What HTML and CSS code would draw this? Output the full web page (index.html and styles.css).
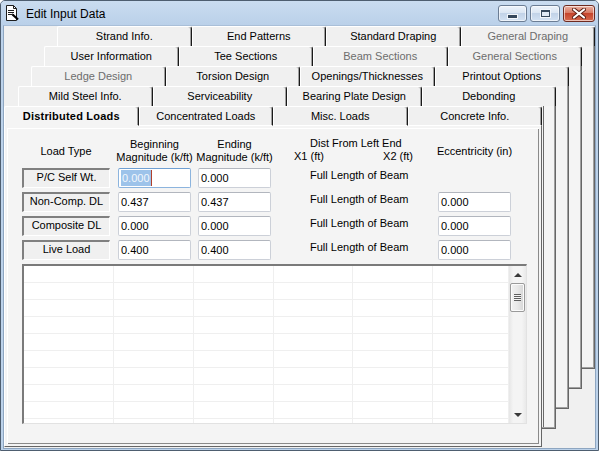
FILE: index.html
```html
<!DOCTYPE html>
<html>
<head>
<meta charset="utf-8">
<title>Edit Input Data</title>
<link rel="stylesheet" href="styles.css">
</head>
<body>
<div class="window">
  <div class="titlebar">
    <svg class="app-icon" viewBox="0 0 16 16" width="16" height="16">
      <path d="M2.5 0.5h7l3 3v12h-10z" fill="#fff" stroke="#1e1e1e"/>
      <path d="M9.5 0.5v3h3" fill="none" stroke="#1e1e1e"/>
      <path d="M4 5.5h6M4 7.5h6M4 9.5h4" stroke="#1e1e1e"/>
      <path d="M8.5 9.5l5.5 5" stroke="#000" stroke-width="2.2"/>
      <path d="M8 9l1.5 0.5" stroke="#000" stroke-width="1"/>
    </svg>
    <span class="title">Edit Input Data</span>
    <div class="caption-buttons">
      <div class="cbtn cbtn-min"><span class="g-min"></span></div>
      <div class="cbtn cbtn-max"><span class="g-max"></span></div>
      <div class="cbtn cbtn-close">
        <svg viewBox="0 0 14 11" width="14" height="11">
          <path d="M2 1.5l10 8M12 1.5l-10 8" stroke="#5a1e14" stroke-width="4" stroke-linecap="round"/>
          <path d="M2 1.5l10 8M12 1.5l-10 8" stroke="#fff" stroke-width="2.2" stroke-linecap="round"/>
        </svg>
      </div>
    </div>
  </div>

  <div class="client">
    <div class="stack">
      <div class="layer layer-1">
        <div class="tabrow">
          <div class="tab">Strand Info.</div>
          <div class="tab">End Patterns</div>
          <div class="tab">Standard Draping</div>
          <div class="tab disabled">General Draping</div>
        </div>
        <div class="page"></div>
      </div>

      <div class="layer layer-2">
        <div class="tabrow">
          <div class="tab">User Information</div>
          <div class="tab">Tee Sections</div>
          <div class="tab disabled">Beam Sections</div>
          <div class="tab disabled">General Sections</div>
        </div>
        <div class="page"></div>
      </div>

      <div class="layer layer-3">
        <div class="tabrow">
          <div class="tab disabled">Ledge Design</div>
          <div class="tab">Torsion Design</div>
          <div class="tab">Openings/Thicknesses</div>
          <div class="tab">Printout Options</div>
        </div>
        <div class="page"></div>
      </div>

      <div class="layer layer-4">
        <div class="tabrow">
          <div class="tab">Mild Steel Info.</div>
          <div class="tab">Serviceability</div>
          <div class="tab">Bearing Plate Design</div>
          <div class="tab">Debonding</div>
        </div>
        <div class="page page-edge"></div>
      </div>

      <div class="layer layer-5">
        <div class="tabrow tabrow-front">
          <div class="tab active">Distributed Loads</div>
          <div class="tab">Concentrated Loads</div>
          <div class="tab">Misc. Loads</div>
          <div class="tab">Concrete Info.</div>
        </div>
        <div class="page page-front">
          <div class="form">
            <div class="hdr hdr-label"><span>Load Type</span></div>
            <div class="hdr hdr-box"><span>Beginning</span><span>Magnitude (k/ft)</span></div>
            <div class="hdr hdr-box"><span>Ending</span><span>Magnitude (k/ft)</span></div>
            <div class="hdr-dist">
              <div class="dist-top">Dist From Left End</div>
              <div class="dist-x"><span>X1 (ft)</span><span>X2 (ft)</span></div>
            </div>
            <div class="hdr hdr-box hdr-single"><span>Eccentricity (in)</span></div>

            <div class="ltype">P/C Self Wt.</div>
            <div class="tb focus"><span class="sel">0.000</span></div>
            <div class="tb">0.000</div>
            <div class="fl">Full Length of Beam</div>
            <div class="empty"></div>

            <div class="ltype">Non-Comp. DL</div>
            <div class="tb">0.437</div>
            <div class="tb">0.437</div>
            <div class="fl">Full Length of Beam</div>
            <div class="tb">0.000</div>

            <div class="ltype">Composite DL</div>
            <div class="tb">0.000</div>
            <div class="tb">0.000</div>
            <div class="fl">Full Length of Beam</div>
            <div class="tb">0.000</div>

            <div class="ltype">Live Load</div>
            <div class="tb">0.400</div>
            <div class="tb">0.400</div>
            <div class="fl">Full Length of Beam</div>
            <div class="tb">0.000</div>
          </div>

          <div class="list">
            <div class="list-grid">
              <div></div><div></div><div></div><div></div><div></div><div></div>
              <div></div><div></div><div></div><div></div><div></div><div></div>
              <div></div><div></div><div></div><div></div><div></div><div></div>
              <div></div><div></div><div></div><div></div><div></div><div></div>
              <div></div><div></div><div></div><div></div><div></div><div></div>
              <div></div><div></div><div></div><div></div><div></div><div></div>
              <div></div><div></div><div></div><div></div><div></div><div></div>
              <div></div><div></div><div></div><div></div><div></div><div></div>
              <div></div><div></div><div></div><div></div><div></div><div></div>
              <div></div><div></div><div></div><div></div><div></div><div></div>
            </div>
            <div class="vscroll">
              <div class="sbtn"><span class="arr-up"></span></div>
              <div class="thumb"><span class="grip"></span></div>
              <div class="track"></div>
              <div class="sbtn"><span class="arr-down"></span></div>
            </div>
          </div>
        </div>
      </div>
    </div>
  </div>
</div>
</body>
</html>
```

FILE: styles.css
```css
* { box-sizing: border-box; }

html, body {
  margin: 0;
  background: #ffffff;
}

body {
  font-family: "Liberation Sans", Arial, sans-serif;
  font-size: 11px;
  color: #000;
}

.window {
  width: 599px;
  height: 451px;
  border: 1px solid #4e5e70;
  border-radius: 5px 5px 0 0;
  background: #bcd2ea;
  display: flex;
  flex-direction: column;
  overflow: hidden;
}

/* ---------- title bar ---------- */
.titlebar {
  height: 24px;
  flex: none;
  display: flex;
  align-items: flex-start;
  background: linear-gradient(#cadcf0, #bad0e9);
}

.app-icon {
  flex: none;
  margin: 4px 0 0 3px;
}

.title {
  font-size: 12px;
  line-height: 16px;
  margin: 5px 0 0 6px;
  color: #000;
}

.caption-buttons {
  margin: 4px 3px 0 auto;
  display: flex;
  gap: 3px;
}

.cbtn {
  height: 17px;
  border: 1px solid #6b7d94;
  border-radius: 3px;
  display: flex;
  align-items: center;
  justify-content: center;
  background: linear-gradient(#eef4fb, #dbe6f3 45%, #c2d3e8 50%, #d3e2f3);
  box-shadow: inset 0 0 0 1px rgba(255,255,255,0.6);
}

.cbtn-min { width: 29px; align-items: flex-end; }
.cbtn-max { width: 30px; }
.cbtn-close {
  width: 32px;
  border-color: #6e2a20;
  background: linear-gradient(#eab1a3, #d87a64 45%, #c6452d 50%, #d66a4f);
}

.g-min {
  width: 9px;
  height: 3px;
  margin-bottom: 3px;
  background: #34475c;
  box-shadow: 0 0 0 1px #f2f6fb;
}

.g-max {
  width: 9px;
  height: 7px;
  border: 1px solid #34475c;
  border-top-width: 2px;
  background: #dfe9f5;
  box-shadow: 0 0 0 1px #f2f6fb;
}

/* ---------- client ---------- */
.client {
  flex: 1;
  margin: 0 2px 1px 2px;
  border: 1px solid #8ea6c1;
  border-top-color: #a9bfd8;
  background: #f0f0f0;
  overflow: hidden;
}

.stack {
  display: grid;
  justify-items: start;
  align-items: start;
}

.layer {
  grid-area: 1 / 1;
  width: 538px;
  height: 343px;
  display: flex;
  flex-direction: column;
}

.layer-1 { margin: 0 0 0 53px; }
.layer-2 { margin: 20px 0 0 40px; }
.layer-3 { margin: 40px 0 0 27px; }
.layer-4 { margin: 60px 0 0 14px; }
.layer-5 { margin: 80px 0 0 0; height: 341px; }

/* ---------- tabs ---------- */
.tabrow {
  height: 20px;
  flex: none;
  display: flex;
}

.tab {
  flex: 1;
  min-width: 0;
  background: #f0f0f0;
  border-left: 1px solid #ffffff;
  border-top: 1px solid #ffffff;
  border-right: 1px solid #1a1a1a;
  box-shadow: inset -1px 0 0 #a0a0a0;
  border-radius: 2px 3px 0 0;
  display: flex;
  align-items: center;
  justify-content: center;
  white-space: nowrap;
  line-height: 13px;
}

.tab.disabled { color: #6d6d6d; }

.tabrow-front .tab { border-bottom: 1px solid #ffffff; }

.tabrow-front .tab.active {
  font-weight: bold;
  letter-spacing: 0.2px;
  background: #f4f4f4;
  border-bottom-color: #f4f4f4;
}

/* ---------- pages ---------- */
.page {
  flex: 1;
  background: #f4f4f4;
  border-right: 1px solid #666666;
  border-bottom: 1px solid #666666;
  box-shadow: inset -1px -1px 0 #a0a0a0;
}

.page-edge {
  background-image: linear-gradient(to left, transparent 11px, #6a6a6a 11px, #6a6a6a 12px, transparent 12px);
}

.page-front {
  border-left: 1px solid #ffffff;
  box-shadow:
    inset 2px 2px 0 #f4f4f4,
    inset -2px -2px 0 #f4f4f4,
    inset 3px 3px 0 #ffffff,
    inset -3px -3px 0 #8a8a8a;
  padding: 11px 0 0 17px;
}

/* ---------- form ---------- */
.form {
  display: grid;
  grid-template-columns: 96px 80px 73px 167px 73px;
  grid-template-rows: 27px repeat(4, 20px);
  row-gap: 4px;
}

.hdr {
  display: flex;
  flex-direction: column;
  align-items: center;
  justify-content: center;
  line-height: 13px;
  white-space: nowrap;
}

.hdr-label { width: 88px; padding-top: 2px; }
.hdr-box { width: 73px; }
.hdr-single { padding-top: 2px; }

.hdr-dist {
  line-height: 13px;
  white-space: nowrap;
}

.dist-top { padding-left: 39px; }

.dist-x {
  display: flex;
  justify-content: space-between;
  padding: 0 25px 0 23px;
}

.ltype {
  width: 88px;
  height: 20px;
  border-style: solid;
  border-width: 2px 1px 1px 2px;
  border-color: #808080 #ffffff #ffffff #808080;
  background: #f0f0f0;
  text-align: center;
  line-height: 15px;
  white-space: nowrap;
}

.tb {
  width: 73px;
  height: 20px;
  border: 1px solid #ccd0d8;
  border-top-color: #b2b6be;
  border-radius: 2px;
  background: #ffffff;
  padding-left: 2px;
  line-height: 18px;
  white-space: nowrap;
}

.tb.focus {
  border-color: #8cb4de;
  border-top-color: #6f9fd2;
  display: flex;
  align-items: center;
}

.sel {
  display: inline-block;
  height: 16px;
  line-height: 16px;
  padding: 0 1px;
  background: #9dc3ea;
  color: #f2f7fc;
  border-right: 1px solid #b0402c;
}

.fl {
  padding-left: 39px;
  line-height: 14px;
  white-space: nowrap;
}

/* ---------- list ---------- */
.list {
  margin-top: 4px;
  width: 505px;
  height: 160px;
  border-style: solid;
  border-width: 2px 1px 1px 2px;
  border-color: #7a7a7a #e2e2e2 #e2e2e2 #7a7a7a;
  background: #ffffff;
  display: flex;
  overflow: hidden;
}

.list-grid {
  flex: 1;
  display: grid;
  grid-template-columns: 90px 80px 80px 79px 80px 1fr;
  grid-auto-rows: 17px;
  align-content: start;
  overflow: hidden;
}

.list-grid div {
  border-right: 1px solid #efefef;
  border-bottom: 1px solid #efefef;
}

.vscroll {
  width: 17px;
  flex: none;
  display: flex;
  flex-direction: column;
  align-items: center;
  background: linear-gradient(to right, #e6e6e6, #f4f4f4 25%, #f4f4f4 75%, #e9e9e9);
}

.sbtn {
  height: 17px;
  width: 17px;
  flex: none;
  display: flex;
  align-items: center;
  justify-content: center;
}

.arr-up {
  width: 0;
  height: 0;
  border-left: 4px solid transparent;
  border-right: 4px solid transparent;
  border-bottom: 4px solid #3a3a3a;
}

.arr-down {
  width: 0;
  height: 0;
  border-left: 4px solid transparent;
  border-right: 4px solid transparent;
  border-top: 4px solid #3a3a3a;
}

.thumb {
  width: 15px;
  height: 29px;
  flex: none;
  border: 1px solid #9a9a9a;
  border-radius: 2px;
  background: linear-gradient(to right, #f2f2f2, #e8e8e8 50%, #d6d6d6);
  box-shadow: inset 0 0 0 1px #fbfbfb;
  display: flex;
  align-items: center;
  justify-content: center;
}

.grip {
  width: 7px;
  height: 7px;
  background: repeating-linear-gradient(#5e5e5e 0 1px, #f4f4f4 1px 2px);
}

.track { flex: 1; }
```
